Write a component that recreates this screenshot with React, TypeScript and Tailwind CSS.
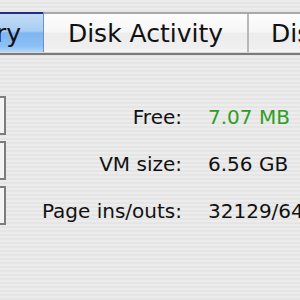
const stripes =
  'bg-[repeating-linear-gradient(180deg,#ececec_0px,#ececec_2px,#e5e5e5_2px,#e5e5e5_4px)]';

const rows = [
  { label: 'Free:', value: '7.07 MB', green: true },
  { label: 'VM size:', value: '6.56 GB', green: false },
  { label: 'Page ins/outs:', value: '32129/6412', green: false },
];

function Tab({ label, selected, className }: { label: string; selected?: boolean; className: string }) {
  return (
    <div
      className={
        'flex flex-col overflow-hidden border-t-2 ' +
        (selected ? 'border-t-[#1f2f86] ' : 'border-t-[#a9a9a9] ') +
        className
      }
    >
      <div
        className={
          'flex h-[38px] items-center overflow-hidden whitespace-nowrap text-[25px] leading-none text-[#111] ' +
          (selected
            ? 'bg-[linear-gradient(180deg,#c3dcf6_0%,#a9cdf3_45%,#7fb6f1_50%,#8cc0f4_85%,#b5d7f7_100%)] '
            : 'bg-[linear-gradient(180deg,#fdfdfd_0%,#f6f6f6_48%,#ececec_50%,#efefef_90%,#f8f8f8_100%)] ')
        }
      >
        {label}
      </div>
    </div>
  );
}

export default function App() {
  return (
    <div className={`h-[300px] w-[300px] overflow-hidden font-['DejaVu_Sans',sans-serif] ${stripes}`}>
      <div className="h-[12px]" />
      {/* tab strip */}
      <div className="flex w-full">
        <Tab label="Memory" selected className="w-[43px] shrink-0 [&>div]:justify-end [&>div]:pr-[22px]" />
        <div className="w-px shrink-0 bg-[#6a93c4]" />
        <Tab label="Disk Activity" className="w-[203px] shrink-0 [&>div]:justify-center" />
        <div className="flex w-[2px] shrink-0 flex-col border-t-2 border-t-[#a9a9a9] bg-[#b8b8b8]" />
        <Tab label="Disk Network" className="flex-1 [&>div]:pl-[22px]" />
      </div>
      <div className="h-px bg-[#d8d8d8]" />
      <div className="h-[2px] bg-[#7b7b7b]" />

      <div className="flex pt-[41px]">
        {/* cut-off controls on the left */}
        <div className="-ml-[34px] flex w-[40px] shrink-0 flex-col gap-[6px]">
          <div className="h-[39px] border-2 border-[#7d7d7d] bg-[#f4f4f4]" />
          <div className="h-[39px] border-2 border-[#7d7d7d] bg-[#f4f4f4]" />
          <div className="h-[39px] border-2 border-[#7d7d7d] bg-[#f4f4f4]" />
        </div>

        <div className="grid shrink-0 grid-cols-[176px_auto] gap-x-[26px] gap-y-[21px] pt-[9px] text-[20px] leading-[24px] text-[#111]">
          {rows.map((r) => (
            <div key={r.label} className="contents">
              <div className="text-right whitespace-nowrap">{r.label}</div>
              <div className={'whitespace-nowrap ' + (r.green ? 'text-[#2f9e22]' : '')}>{r.value}</div>
            </div>
          ))}
        </div>
      </div>
    </div>
  );
}
